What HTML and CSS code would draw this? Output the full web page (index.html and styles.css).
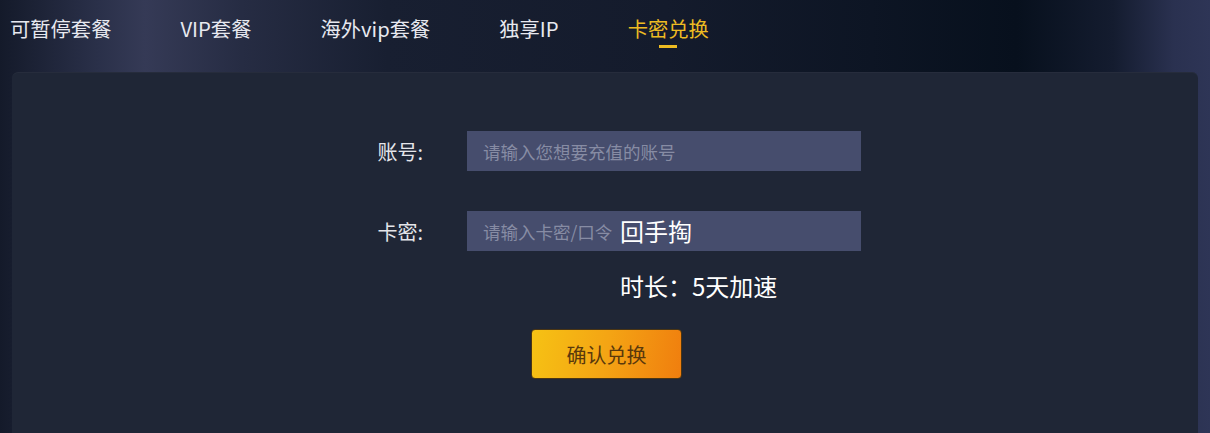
FILE: index.html
```html
<!DOCTYPE html>
<html lang="zh-CN">
<head>
<meta charset="utf-8">
<title>卡密兑换</title>
<link rel="stylesheet" href="styles.css">
</head>
<body>
<nav class="tabs">
  <a class="tab">可暂停套餐</a>
  <a class="tab">VIP套餐</a>
  <a class="tab">海外vip套餐</a>
  <a class="tab">独享IP</a>
  <a class="tab active">卡密兑换</a>
</nav>
<main class="card">
  <form class="redeem">
    <div class="row">
      <label class="label">账号:</label>
      <div class="field"><input class="input" type="text" placeholder="请输入您想要充值的账号"></div>
    </div>
    <div class="row row-gap">
      <label class="label">卡密:</label>
      <div class="field"><input class="input" type="text" placeholder="请输入卡密/口令"><span class="hint">回手掏</span></div>
    </div>
    <div class="duration">时长：5天加速</div>
    <button class="submit" type="button">确认兑换</button>
  </form>
</main>
</body>
</html>
```
FILE: styles.css
```css
html, body {
  margin: 0;
  padding: 0;
}
body {
  width: 1210px;
  height: 433px;
  overflow: hidden;
  font-family: "Noto Sans CJK SC", "Noto Sans", sans-serif;
  background: linear-gradient(90deg, #141a2a 0%, #2a3049 8%, #353a56 12%, #262c43 20%, #181f31 32%, #141b2c 55%, #0d1524 72%, #07101d 84%, #141c2f 92%, #2a3150 97%, #2e3556 100%);
}
.tabs {
  display: flex;
  gap: 69px;
  padding: 14px 0 0 10px;
  height: 58px;
}
.tab {
  position: relative;
  font-size: 20.3px;
  line-height: 28px;
  height: 28px;
  color: #e8e9f0;
  cursor: pointer;
}
.tab.active {
  color: #edbb22;
}
.tab.active::after {
  content: "";
  position: absolute;
  left: 50%;
  top: 31px;
  width: 18px;
  height: 3px;
  margin-left: -9px;
  background: #edbb22;
}
.card {
  margin: 0 12px;
  height: 361px;
  background: #1f2636;
  border-radius: 6px 6px 0 0;
  box-shadow: inset 0 1px 0 rgba(255,255,255,0.03);
  padding-top: 59px;
  box-sizing: border-box;
}
.redeem {
  margin: 0 0 0 299px;
  display: flex;
  flex-direction: column;
  align-items: flex-start;
}
.row {
  display: flex;
  align-items: center;
  height: 40px;
}
.row-gap {
  margin-top: 40px;
}
.label {
  width: 156px;
  box-sizing: border-box;
  padding-right: 44px;
  text-align: right;
  font-size: 20px;
  color: #e4e5ea;
}
.field {
  position: relative;
  width: 394px;
  height: 40px;
}
.input {
  width: 100%;
  height: 100%;
  box-sizing: border-box;
  border: none;
  outline: none;
  padding: 0 16px;
  background: #464d6d;
  color: #ffffff;
  font-family: "Noto Sans CJK SC", "Noto Sans", sans-serif;
  font-size: 17.5px;
}
.input::placeholder {
  color: #878ca4;
}
.hint {
  position: absolute;
  left: 153px;
  top: 0;
  line-height: 40px;
  font-size: 24px;
  color: #ffffff;
  pointer-events: none;
}
.duration {
  margin: 19px 0 0 309px;
  font-size: 24px;
  line-height: 32px;
  color: #ffffff;
}
.submit {
  margin: 27px 0 0 220px;
  width: 151px;
  height: 50px;
  border: 1px solid #4a3514;
  border-radius: 4px;
  background: linear-gradient(100deg, #f6c214 0%, #f4a414 50%, #f07e0e 100%);
  color: #5a390c;
  font-family: "Noto Sans CJK SC", "Noto Sans", sans-serif;
  font-size: 20px;
  cursor: pointer;
  padding: 0;
}
```
